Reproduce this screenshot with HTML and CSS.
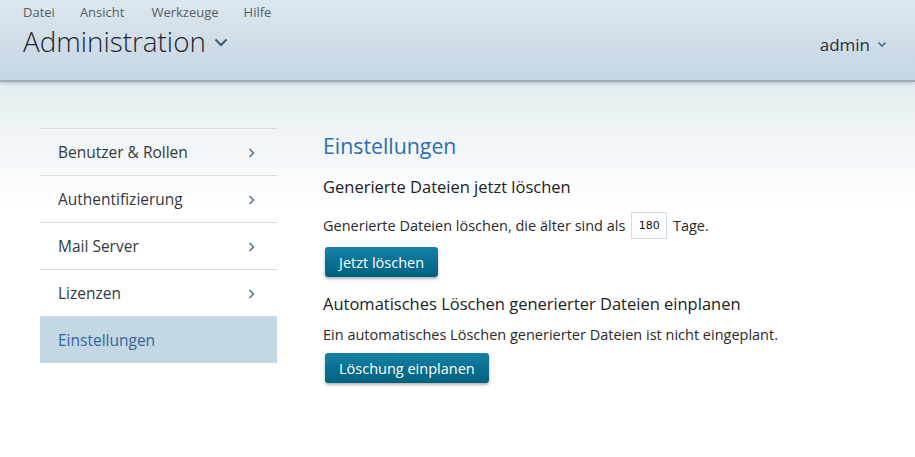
FILE: index.html
```html
<!DOCTYPE html>
<html lang="de">
<head>
<meta charset="utf-8">
<title>Administration</title>
<link rel="stylesheet" href="styles.css">
</head>
<body>
<header class="topbar">
  <nav class="menu">
    <span>Datei</span>
    <span>Ansicht</span>
    <span>Werkzeuge</span>
    <span>Hilfe</span>
  </nav>
  <div class="titlerow">
    <h1 class="apptitle">Administration
      <svg class="chev-down big" viewBox="0 0 14 9" width="14" height="9"><path d="M1.5 1.5 L7 7 L12.5 1.5" fill="none" stroke="#3d5a78" stroke-width="2"/></svg>
    </h1>
    <div class="user">admin
      <svg class="chev-down" viewBox="0 0 10 7" width="10" height="7"><path d="M1.5 1.5 L5 5 L8.5 1.5" fill="none" stroke="#4a6a8a" stroke-width="1.6"/></svg>
    </div>
  </div>
</header>
<main class="page">
  <aside class="sidebar">
    <a class="navitem">Benutzer &amp; Rollen<svg class="chev" viewBox="0 0 7 10" width="7" height="10"><path d="M1.5 1 L5.5 5 L1.5 9" fill="none" stroke="#4a6a8a" stroke-width="1.4"/></svg></a>
    <a class="navitem">Authentifizierung<svg class="chev" viewBox="0 0 7 10" width="7" height="10"><path d="M1.5 1 L5.5 5 L1.5 9" fill="none" stroke="#4a6a8a" stroke-width="1.4"/></svg></a>
    <a class="navitem">Mail Server<svg class="chev" viewBox="0 0 7 10" width="7" height="10"><path d="M1.5 1 L5.5 5 L1.5 9" fill="none" stroke="#4a6a8a" stroke-width="1.4"/></svg></a>
    <a class="navitem">Lizenzen<svg class="chev" viewBox="0 0 7 10" width="7" height="10"><path d="M1.5 1 L5.5 5 L1.5 9" fill="none" stroke="#4a6a8a" stroke-width="1.4"/></svg></a>
    <a class="navitem active">Einstellungen</a>
  </aside>
  <section class="content">
    <h2 class="heading">Einstellungen</h2>
    <h3 class="subheading">Generierte Dateien jetzt löschen</h3>
    <p class="line">Generierte Dateien löschen, die älter sind als <input class="days" type="text" value="180"> Tage.</p>
    <button class="btn">Jetzt löschen</button>
    <h3 class="subheading second">Automatisches Löschen generierter Dateien einplanen</h3>
    <p class="line plain">Ein automatisches Löschen generierter Dateien ist nicht eingeplant.</p>
    <button class="btn">Löschung einplanen</button>
  </section>
</main>
</body>
</html>
```

FILE: styles.css
```css
* { box-sizing: border-box; }
html, body { margin: 0; padding: 0; }
body {
  font-family: "Open Sans", "Noto Sans", sans-serif;
  color: #2a2a2a;
  background: linear-gradient(to bottom, #e4edf1 82px, #ffffff 210px);
  min-height: 457px;
}
.topbar {
  height: 82px;
  background: linear-gradient(to bottom, #dde7ef 0%, #c4d5e3 100%);
  border-bottom: 2px solid #a3abb3;
  box-shadow: 0 2px 3px rgba(120, 140, 160, 0.35);
  padding: 3px 28px 0 23px;
}
.menu {
  display: flex;
  font-size: 13px;
  color: #555e66;
  line-height: 18px;
}
.menu span { margin-right: 25px; }
.menu span:nth-child(2) { margin-right: 27px; }
.titlerow {
  display: flex;
  justify-content: space-between;
  align-items: center;
  height: 44px;
  margin-top: -2px;
}
.apptitle {
  margin: 0;
  font-weight: 300;
  font-size: 27.8px;
  line-height: 44px;
  color: #1e2630;
  display: flex;
  align-items: center;
  gap: 8px;
}
.apptitle .big { margin-top: 2px; }
.user {
  font-size: 17px;
  color: #2a2f35;
  display: flex;
  align-items: center;
  gap: 7px;
  margin-top: 6px;
}
.page {
  display: flex;
  padding: 46px 0 0 40px;
}
.sidebar {
  width: 237px;
  border-top: 1px solid #dadde0;
  flex: none;
}
.navitem {
  display: flex;
  justify-content: space-between;
  align-items: center;
  height: 47px;
  border-bottom: 1px solid #dadde0;
  padding: 0 22px 0 18px;
  font-size: 15.5px;
  color: #333a40;
}
.navitem .chev { margin-top: 1px; }
.navitem.active {
  background: #c3d8e2;
  color: #3565a0;
  border-bottom-color: #c3d8e2;
  height: 46px;
}
.content {
  padding-left: 46px;
  padding-top: 1px;
}
.heading {
  margin: 0;
  font-weight: 400;
  font-size: 21.3px;
  line-height: 34px;
  color: #2e6db4;
}
.subheading {
  margin: 12px 0 0;
  font-weight: 400;
  font-size: 16.5px;
  line-height: 24px;
  color: #222;
}
.subheading.second { margin-top: 15px; }
.line {
  margin: 13px 0 0;
  font-size: 14.5px;
  line-height: 27px;
  color: #2a2a2a;
  display: flex;
  align-items: center;
  white-space: pre;
}
.line.plain { margin-top: 9px; line-height: 20px; }
.days {
  width: 36px;
  height: 27px;
  border: 1px solid #cfdde9;
  margin: 0 2px;
  font-family: "DejaVu Sans", sans-serif;
  font-size: 11px;
  text-align: center;
  color: #111;
  padding: 0;
}
.btn {
  display: block;
  margin: 8px 0 0 2px;
  height: 30px;
  padding: 0 14px;
  font-family: "Open Sans", "Noto Sans", sans-serif;
  font-size: 14.5px;
  color: #ffffff;
  border: 0;
  border-radius: 3px;
  background: linear-gradient(to bottom, #1580a6, #00617f);
  box-shadow: 0 2px 3px rgba(0, 0, 0, 0.3);
}
.line.plain + .btn { margin-top: 8px; }
```
